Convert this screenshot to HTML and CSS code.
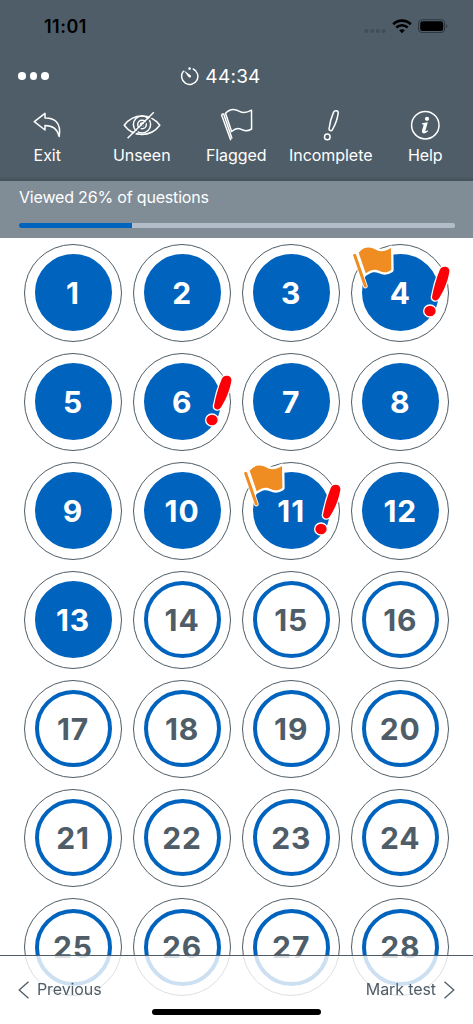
FILE: index.html
```html
<!DOCTYPE html>
<html lang="en">

<head>
  <meta charset="utf-8">
  <title>Test Review</title>
  <link rel="stylesheet" href="styles.css">
</head>

<body>
  <!-- Shared badge shapes -->
  <svg class="symbols">
    <symbol id="flag" viewBox="34 26 135 144">
      <path class="outline" d="M45 60L77 152M57 52C76 30 96 36 112 45C126 52 142 46 154 38L155 104C142 113 130 112 120 107C102 99 92 106 78 114Z" />
      <path class="pole" d="M45 60L77 152" />
      <path class="cloth" d="M57 52C76 30 96 36 112 45C126 52 142 46 154 38L155 104C142 113 130 112 120 107C102 99 92 106 78 114Z" />
    </symbol>
    <symbol id="mark" viewBox="240 86 96 170">
      <path d="M299 108C304 92 331 95 328 113C323 143 310 173 296 193C289 202 276 199 276 188C281 160 289 133 299 108Z" />
      <ellipse cx="270" cy="230" rx="17" ry="16" />
    </symbol>
  </svg>

  <header class="header">
    <div class="status-bar">
      <span class="clock">11:01</span>
      <svg class="status-icons" width="84" height="16" viewBox="0 0 84 16">
        <g fill="#414d58">
          <circle cx="2.5" cy="12" r="2" />
          <circle cx="8.2" cy="12" r="2" />
          <circle cx="13.9" cy="12" r="2" />
          <circle cx="19.6" cy="12" r="2" />
        </g>
        <g fill="none" stroke="#000" stroke-width="2.6">
          <path d="M29.2 5.2C34.2 .4 41.8 .4 46.8 5.2" />
          <path d="M32.3 8.5C35.5 5.5 40.5 5.5 43.7 8.5" />
        </g>
        <path d="M35.2 11.3Q38 9.2 40.8 11.3L38 14.2Z" />
        <rect x="54.6" y=".7" width="26" height="12.8" rx="3.8" fill="none" stroke="#2d3840" stroke-width="1.1" />
        <rect x="56.2" y="2.2" width="23" height="9.8" rx="2.5" />
        <path d="M82 5Q85 7 82 9.3Z" fill="#35414a" />
      </svg>
    </div>

    <div class="title-bar">
      <div class="more"><i></i><i></i><i></i></div>
      <div class="timer">
        <svg width="19" height="19" viewBox="0 0 19 19">
          <path d="M13.2 2A8.1 8.1 0 1 1 3.3 4.4" fill="none" stroke="#fff" stroke-width="1.5" stroke-linecap="round" />
          <circle cx="9.6" cy="1.6" r="1.3" fill="#fff" />
          <path d="M3.7 3.2L10.9 8.4Q11.5 9.8 10.4 10.4Q9 11 8.3 9.8Z" fill="#fff" />
        </svg>
        <span>44:34</span>
      </div>
    </div>

    <nav class="toolbar">
      <a class="tool">
        <svg width="38" height="32" viewBox="0 0 38 32">
          <path d="M6.3 13.7L17 5.4V10C26 9.8 33.5 14 31.2 28.5C29.5 21.5 25 17.6 17 17.6V22Z" />
        </svg>
        <span>Exit</span>
      </a>
      <a class="tool">
        <svg width="38" height="32" viewBox="0 0 38 32">
          <path d="M1.2 17.3C10.5 5 27.5 5 36.8 17.3C27.5 29.6 10.5 29.6 1.2 17.3Z" />
          <circle cx="19" cy="16.5" r="8.6" />
          <circle cx="19" cy="16.5" r="4.3" />
          <circle cx="19" cy="16.5" r="1.5" />
          <path class="gap" d="M6.3 30.8L31.8 5.7" />
          <path d="M4.6 30.2L30.8 4.3" />
        </svg>
        <span>Unseen</span>
      </a>
      <a class="tool">
        <svg width="38" height="32" viewBox="0 0 38 32">
          <path d="M4.4 6.6L13.8 32.3M6.6 5.8L15 30.5M4.4 6.6L6.6 5.8M8.5 5.2C13 .5 18.5 1 22.5 3.4C26.5 5.6 30.5 4.5 34.5 2.2L34.6 21C30 23.8 26.5 22.8 23.8 21.2C20.5 19.4 17.5 21 14.6 23.5Z" />
        </svg>
        <span>Flagged</span>
      </a>
      <a class="tool">
        <svg width="38" height="32" viewBox="0 0 38 32">
          <path d="M21.5 4.4C22.5 2 26.5 2.2 26.2 5.2C25.4 11 23.2 17 20.4 21.7C19.3 23.2 17 22.8 17 21C17.8 15 19.2 9.5 21.5 4.4Z" />
          <circle cx="15.3" cy="28.9" r="2.8" />
        </svg>
        <span>Incomplete</span>
      </a>
      <a class="tool">
        <svg width="38" height="32" viewBox="0 0 38 32">
          <circle cx="19.3" cy="17.2" r="13.7" />
          <circle class="solid" cx="21" cy="10.8" r="2.1" />
          <path class="solid" d="M16 15.2L21.8 14.3L19.4 22.7Q19.3 23.9 21.6 22.2L22.2 23Q19.8 25.8 17.2 25.3Q15.4 24.8 16 22.6L17.7 16.7L15.9 16.2Z" />
        </svg>
        <span>Help</span>
      </a>
    </nav>
  </header>

  <section class="progress">
    <p>Viewed 26% of questions</p>
    <div class="track">
      <div class="bar" style="width: 26%"></div>
    </div>
  </section>

  <main class="grid">
    <a class="question seen"><span>1</span></a>
    <a class="question seen"><span>2</span></a>
    <a class="question seen"><span>3</span></a>
    <a class="question seen"><span>4</span>
      <svg class="badge-flag"><use href="#flag" /></svg>
      <svg class="badge-mark"><use href="#mark" /></svg>
    </a>
    <a class="question seen"><span>5</span></a>
    <a class="question seen"><span>6</span>
      <svg class="badge-mark"><use href="#mark" /></svg>
    </a>
    <a class="question seen"><span>7</span></a>
    <a class="question seen"><span>8</span></a>
    <a class="question seen"><span>9</span></a>
    <a class="question seen"><span>10</span></a>
    <a class="question seen"><span>11</span>
      <svg class="badge-flag"><use href="#flag" /></svg>
      <svg class="badge-mark"><use href="#mark" /></svg>
    </a>
    <a class="question seen"><span>12</span></a>
    <a class="question seen"><span>13</span></a>
    <a class="question"><span>14</span></a>
    <a class="question"><span>15</span></a>
    <a class="question"><span>16</span></a>
    <a class="question"><span>17</span></a>
    <a class="question"><span>18</span></a>
    <a class="question"><span>19</span></a>
    <a class="question"><span>20</span></a>
    <a class="question"><span>21</span></a>
    <a class="question"><span>22</span></a>
    <a class="question"><span>23</span></a>
    <a class="question"><span>24</span></a>
    <a class="question"><span>25</span></a>
    <a class="question"><span>26</span></a>
    <a class="question"><span>27</span></a>
    <a class="question"><span>28</span></a>
  </main>

  <footer class="footer">
    <div class="footer-links">
      <a>
        <svg width="12" height="18" viewBox="0 0 12 18"><path d="M10.5 .8L1.2 9L10.5 17.2" /></svg>
        <span>Previous</span>
      </a>
      <a>
        <span>Mark test</span>
        <svg width="12" height="18" viewBox="0 0 12 18"><path d="M1.5 .8L10.8 9L1.5 17.2" /></svg>
      </a>
    </div>
    <div class="home-indicator"></div>
  </footer>
</body>

</html>
```
FILE: styles.css
```css
* {
  box-sizing: border-box;
}

body {
  margin: 0;
  height: 1024px;
  overflow: hidden;
  font-family: Inter, sans-serif;
  background-color: #ffffff;
  color: #4e5d67;
}

svg {
  display: block;
}

.symbols {
  width: 0;
  height: 0;
}

/* Header */
.header {
  height: 181px;
  background: linear-gradient(#4e5d67 0, #4e5d67 176px, #43515b 181px);
  color: #ffffff;
}

.status-bar {
  display: flex;
  justify-content: space-between;
  height: 50px;
  padding: 16px 25px 0 44px;
  color: #000000;
}

.clock {
  font-size: 18px;
  font-weight: 600;
  line-height: 21px;
  letter-spacing: 0.5px;
}

.status-icons {
  margin-top: 3px;
}

.title-bar {
  display: grid;
  grid-template-columns: 1fr auto 1fr;
  align-items: center;
  height: 52px;
  padding: 0 18px;
}

.more {
  display: flex;
  gap: 4px;
}

.more i {
  width: 7.5px;
  height: 7.5px;
  border-radius: 50%;
  background-color: #ffffff;
}

.timer {
  grid-column: 2;
  display: flex;
  align-items: center;
  gap: 6px;
  margin-left: -32px;
  font-size: 19px;
  letter-spacing: 0.25px;
}

.toolbar {
  display: grid;
  grid-template-columns: repeat(5, 94.5px);
}

.tool {
  display: flex;
  flex-direction: column;
  align-items: center;
  padding-top: 6px;
  font-size: 16px;
  letter-spacing: -0.05px;
}

.tool svg {
  overflow: visible;
  fill: none;
  stroke: #ffffff;
  stroke-width: 1.5;
  stroke-linejoin: round;
}

.tool .gap {
  stroke: #4e5d67;
}

.tool .solid {
  fill: #ffffff;
  stroke: none;
}

.tool span {
  margin-top: 5px;
  line-height: 20px;
}

/* Progress */
.progress {
  height: 57px;
  padding: 6px 18px 0 19px;
  background-color: #808d97;
  color: #ffffff;
}

.progress p {
  margin: 0;
  font-size: 16px;
  line-height: 21px;
  letter-spacing: -0.18px;
}

.track {
  height: 5px;
  margin-top: 15px;
  border-radius: 2px;
  background-color: #b3bdc9;
  overflow: hidden;
}

.bar {
  height: 100%;
  background-color: #0063be;
}

/* Questions */
.grid {
  display: grid;
  grid-template-columns: repeat(4, 98px);
  gap: 11.1px;
  padding: 5.5px 24px 0;
}

.question {
  position: relative;
  height: 98px;
  padding: 9.5px;
  border: 1.2px solid #4e5d67;
  border-radius: 50%;
}

.question span {
  display: flex;
  justify-content: center;
  align-items: center;
  height: 100%;
  border: 4px solid #0063be;
  border-radius: 50%;
  font-size: 30px;
  font-weight: 700;
  letter-spacing: 0.9px;
}

.question.seen span {
  background-color: #0063be;
  color: #ffffff;
}

.badge-flag {
  position: absolute;
  top: -1px;
  left: -1px;
  width: 45px;
  height: 48px;
  overflow: visible;
}

.badge-mark {
  position: absolute;
  top: 18px;
  left: 67.7px;
  width: 32px;
  height: 56.7px;
  overflow: visible;
}

#flag,
#mark {
  overflow: visible;
}

#flag path {
  stroke-linecap: round;
  stroke-linejoin: round;
}

#flag .outline {
  fill: #ffffff;
  stroke: #ffffff;
  stroke-width: 14;
}

#flag .pole {
  fill: none;
  stroke: #ef8c22;
  stroke-width: 9;
}

#flag .cloth {
  fill: #ef8c22;
}

#mark {
  fill: #fc0007;
  stroke: #ffffff;
  stroke-width: 8;
  paint-order: stroke;
}

/* Footer */
.footer {
  position: fixed;
  left: 0;
  right: 0;
  bottom: 0;
  height: 69px;
  border-top: 1px solid #4e5d67;
  background-color: rgba(255, 255, 255, 0.8);
}

.footer-links {
  display: flex;
  justify-content: space-between;
  padding: 23px 18px 0;
}

.footer-links a {
  display: flex;
  align-items: center;
  gap: 7px;
  font-size: 16px;
  line-height: 21px;
  letter-spacing: -0.1px;
}

.footer-links svg {
  fill: none;
  stroke: #4e5d67;
  stroke-width: 1.3;
}

.home-indicator {
  width: 169px;
  height: 6px;
  margin: 9px auto 0;
  border-radius: 3px;
  background-color: #000000;
}
```
